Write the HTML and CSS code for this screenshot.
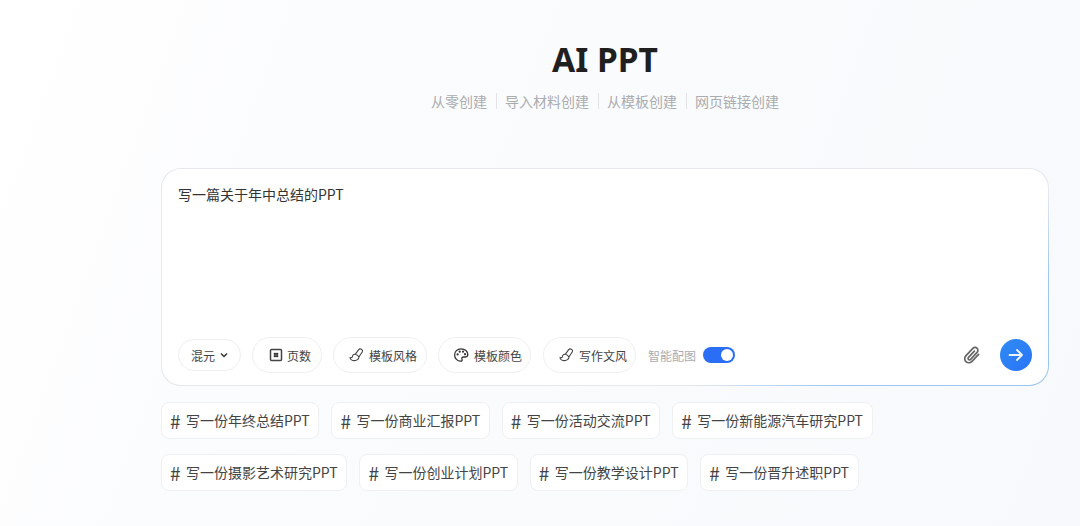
FILE: index.html
```html
<!DOCTYPE html>
<html lang="zh">
<head>
<meta charset="utf-8">
<title>AI PPT</title>
<link rel="stylesheet" href="styles.css">
</head>
<body>
<main class="page">
  <header class="head">
    <h1 class="title">AI PPT</h1>
    <nav class="tabs">
      <a class="tab">从零创建</a>
      <a class="tab">导入材料创建</a>
      <a class="tab">从模板创建</a>
      <a class="tab">网页链接创建</a>
    </nav>
  </header>
  <section class="card">
    <p class="prompt">写一篇关于年中总结的PPT</p>
    <div class="toolbar">
      <button class="pill model">混元
        <svg class="chev" viewBox="0 0 10 10" width="10" height="10"><path d="M2 3.500 5 6.500 8 3.500" fill="none" stroke="#333" stroke-width="1.500"/></svg>
      </button>
      <button class="pill pages">
        <svg viewBox="0 0 14 14" width="14" height="14"><rect x="1.500" y="1.500" width="11" height="11" rx="1" fill="none" stroke="#444" stroke-width="1.500"/><path d="M5.900 4.700v4.600M8.100 4.700v4.600M4.700 5.900h4.600M4.700 8.100h4.600" stroke="#222" stroke-width="1.100"/></svg>
        页数</button>
      <button class="pill style">
        <svg viewBox="0 0 16 16" width="16" height="16"><path d="M7.200 7.300 10.700 2.600c1.300-1.700 4.700.2 3.700 2.200L11 9.800M7.200 7.300C5.400 7 4.500 8.200 4.500 9.500 4.500 10.500 3 11 2 10.500 2 13 5 14 7.500 13.500 9.500 13 11 11.800 11 9.800 10 8.600 8.500 7.600 7.200 7.300Z" fill="none" stroke="#444" stroke-width="1.100" stroke-linejoin="round"/></svg>
        模板风格</button>
      <button class="pill color">
        <svg viewBox="0 0 16 16" width="16" height="16"><path d="M8 1.800C4.200 1.800 1.600 4.600 1.600 8c0 3.300 2.800 6.200 6 6.200 1.400 0 1.900-1 1.400-2-.6-1.200.2-2.200 1.500-2.200h2c1.300 0 2.300-.9 2.300-2.400 0-3.300-2.800-5.800-6.800-5.800Z" fill="none" stroke="#333" stroke-width="1.300"/><circle cx="4.600" cy="7.400" r="1.100" fill="#333"/><circle cx="6.700" cy="4.700" r="1.100" fill="#333"/><circle cx="10" cy="4.700" r="1.100" fill="#333"/><circle cx="12" cy="7.200" r="1.100" fill="#333"/></svg>
        模板颜色</button>
      <button class="pill tone">
        <svg viewBox="0 0 16 16" width="16" height="16"><path d="M7.200 7.300 10.700 2.600c1.300-1.700 4.700.2 3.700 2.200L11 9.800M7.200 7.300C5.400 7 4.500 8.200 4.500 9.500 4.500 10.500 3 11 2 10.500 2 13 5 14 7.500 13.500 9.500 13 11 11.800 11 9.800 10 8.600 8.500 7.600 7.200 7.300Z" fill="none" stroke="#444" stroke-width="1.100" stroke-linejoin="round"/></svg>
        写作文风</button>
      <span class="switch-label">智能配图</span>
      <span class="switch"><span class="knob"></span></span>
      <span class="spacer"></span>
      <svg class="clip" viewBox="0 0 20 20" width="20" height="20"><path d="M16.600 9.300 10 16.300c-1.700 1.800-4.400 1.900-6 .4-1.700-1.600-1.700-4.200 0-6l6.900-7.300c1.100-1.200 3-1.300 4.100-.2 1.200 1.100 1.200 3 .1 4.200l-6.500 6.900c-.6.600-1.500.7-2.100.1-.6-.6-.6-1.500 0-2.100l5.900-6.200" fill="none" stroke="#666" stroke-width="1.700" stroke-linecap="round"/></svg>
      <button class="send">
        <svg viewBox="0 0 18 18" width="18" height="18"><path d="M2.500 9h12.500M10 4l5 5-5 5" fill="none" stroke="#eef4ff" stroke-width="1.800" stroke-linecap="round" stroke-linejoin="round"/></svg>
      </button>
    </div>
  </section>
  <div class="chip-row">
    <a class="chip"><span class="hash">#</span>写一份年终总结PPT</a>
    <a class="chip"><span class="hash">#</span>写一份商业汇报PPT</a>
    <a class="chip"><span class="hash">#</span>写一份活动交流PPT</a>
    <a class="chip"><span class="hash">#</span>写一份新能源汽车研究PPT</a>
  </div>
  <div class="chip-row">
    <a class="chip"><span class="hash">#</span>写一份摄影艺术研究PPT</a>
    <a class="chip"><span class="hash">#</span>写一份创业计划PPT</a>
    <a class="chip"><span class="hash">#</span>写一份教学设计PPT</a>
    <a class="chip"><span class="hash">#</span>写一份晋升述职PPT</a>
  </div>
</main>
</body>
</html>
```
FILE: styles.css
```css
* { box-sizing: border-box; }
html, body { margin: 0; height: 100%; }
body {
  height: 526px;
  overflow: hidden;
  background: linear-gradient(110deg, #ffffff 0%, #fbfcfd 25%, #f8f9fc 100%);
  font-family: "Noto Sans CJK SC", "Noto Sans", sans-serif;
  color: #333;
}
.page { width: 888px; margin-left: 161px; }
.head { height: 168px; padding-top: 36px; text-align: center; }
.title {
  margin: 0;
  font-family: "Noto Sans", "Noto Sans CJK SC", sans-serif;
  font-size: 33.5px;
  line-height: 46px;
  font-weight: 700;
  color: #1f1f1f;
}
.tabs { display: flex; justify-content: center; margin-top: 11px; }
.tab {
  font-size: 14px;
  line-height: 16px;
  color: #aaacb0;
  padding: 0 8.5px;
  border-left: 1px solid #e3e4e8;
}
.tab:first-child { border-left: 0; }
.card {
  height: 218px;
  border-radius: 20px;
  border: 1px solid transparent;
  background:
    linear-gradient(#fff, #fff) padding-box,
    linear-gradient(152deg, #e6e8ee 0%, #e6e8ee 72%, #9cc6f2 84%, #9cc6f2 100%) border-box;
  padding: 15px 16px 12px;
  display: flex;
  flex-direction: column;
  justify-content: space-between;
}
.prompt { margin: 0; font-size: 14px; line-height: 20px; color: #333; }
.toolbar { display: flex; align-items: center; height: 36px; }
.pill {
  font: inherit;
  font-size: 12px;
  color: #444;
  height: 36px;
  border: 1px solid #efeff2;
  border-radius: 18px;
  background: #fff;
  display: flex;
  align-items: center;
  justify-content: flex-start;
  gap: 5px;
  padding: 0 0 0 14px;
  flex: none;
}
.model { width: 63px; height: 32px; margin-right: 11px; gap: 4px; padding-left: 12px; }
.pages { width: 70px; margin-right: 11px; padding-left: 16px; gap: 4px; }
.style { width: 94px; margin-right: 11px; }
.color { width: 93px; margin-right: 12px; }
.tone { width: 93px; margin-right: 12px; }
.switch-label { font-size: 12px; color: #a9abb0; margin-right: 7px; }
.switch {
  width: 32px;
  height: 16px;
  border-radius: 8px;
  background: #2a6ef5;
  display: flex;
  align-items: center;
  justify-content: flex-end;
  padding-right: 2px;
}
.knob { width: 12px; height: 12px; border-radius: 50%; background: #fff; }
.spacer { flex: 1; }
.clip { margin-right: 18px; }
.send {
  width: 32px;
  height: 32px;
  border: 0;
  border-radius: 50%;
  padding: 0;
  background: linear-gradient(135deg, #2f8cf3, #2a73f8);
  display: flex;
  align-items: center;
  justify-content: center;
}
.chip-row { display: flex; gap: 12px; margin-top: 15px; }
.card + .chip-row { margin-top: 16px; }
.chip {
  height: 37px;
  padding: 0 8.7px 1px 8px;
  display: flex;
  align-items: center;
  border: 1px solid #eff0f4;
  border-radius: 8px;
  background: #fff;
  font-size: 14px;
  color: #444;
}
.hash { font-size: 19px; width: 16px; line-height: 1; flex: none; }
```
